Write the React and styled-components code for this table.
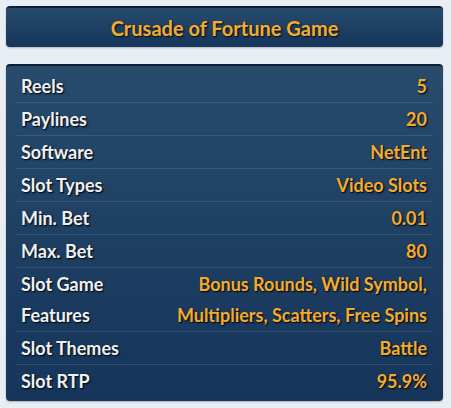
import React from 'react';
import styled, { createGlobalStyle } from 'styled-components';

const GlobalStyle = createGlobalStyle`
  body {
    margin: 0;
    background: #e9eef4;
    font-family: Lato, "Open Sans", sans-serif;
  }
`;

const Page = styled.div`
  display: flex;
  flex-direction: column;
  gap: 17px;
  padding: 6px 8px 6px 6px;
`;

const Panel = styled.div`
  background: linear-gradient(to bottom, #284b6c 0%, #15355a 100%);
  border-top: 2px solid #0c1e33;
  border-radius: 4px;
  box-shadow: 0 1px 2px rgba(0, 0, 0, 0.25);
`;

const Title = styled.h2`
  margin: 0;
  height: 39px;
  display: flex;
  align-items: center;
  justify-content: center;
  font-size: 20px;
  font-weight: 700;
  color: #f6ac2c;
  text-shadow: 1px 1px 0 #08182a, 1px 1px 2px #08182a;
`;

const Table = styled.div`
  display: flex;
  flex-direction: column;
  padding: 4px 10px 3px;
`;

const Row = styled.div`
  display: flex;
  justify-content: space-between;
  align-items: flex-start;
  gap: 16px;
  padding: 1px 6px 0 5px;
  line-height: 31px;
  font-size: 18px;
  font-weight: 700;
  border-bottom: 1px solid ${p => (p.last ? 'transparent' : 'rgba(120, 150, 180, 0.25)')};
  text-shadow: 1px 1px 0 #06121f, 1px 1px 2px #06121f;
`;

const Label = styled.span`
  color: #f0f0f0;
  width: ${p => (p.narrow ? '110px' : 'auto')};
  white-space: ${p => (p.narrow ? 'normal' : 'nowrap')};
`;

const Value = styled.span`
  color: #f7ab2d;
  text-align: right;
  max-width: 258px;
`;

const rows = [
  ['Reels', '5'],
  ['Paylines', '20'],
  ['Software', 'NetEnt'],
  ['Slot Types', 'Video Slots'],
  ['Min. Bet', '0.01'],
  ['Max. Bet', '80'],
  ['Slot Game Features', 'Bonus Rounds, Wild Symbol, Multipliers, Scatters, Free Spins', true],
  ['Slot Themes', 'Battle'],
  ['Slot RTP', '95.9%'],
];

export default function App() {
  return (
    <>
      <GlobalStyle />
      <Page>
        <Panel>
          <Title>Crusade of Fortune Game</Title>
        </Panel>
        <Panel>
          <Table>
            {rows.map(([label, value, wrap], i) => (
              <Row key={label} last={i === rows.length - 1}>
                <Label narrow={wrap}>{label}</Label>
                <Value>{value}</Value>
              </Row>
            ))}
          </Table>
        </Panel>
      </Page>
    </>
  );
}
